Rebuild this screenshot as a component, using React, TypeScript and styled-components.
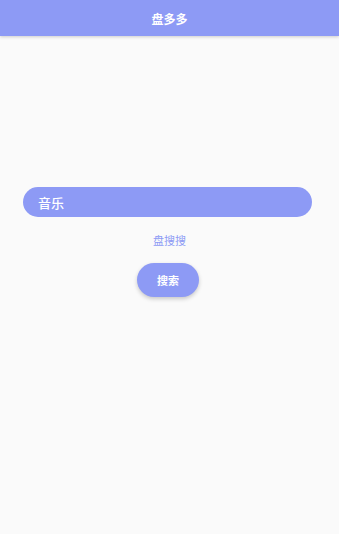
import React from "react";
import styled, { createGlobalStyle } from "styled-components";

const Global = createGlobalStyle`
  html, body { margin: 0; padding: 0; background: #fafafa; }
  body { font-family: Roboto, "Noto Sans CJK SC", "Noto Sans", sans-serif; }
`;

const Page = styled.div`
  min-height: 534px;
  background: #fafafa;
  display: flex;
  flex-direction: column;
`;

const Header = styled.header`
  height: 36px;
  background: #8d9af5;
  box-shadow: 0 1px 3px rgba(0, 0, 0, 0.18);
  display: flex;
  align-items: center;
  justify-content: center;
  color: #ffffff;
  font-size: 12px;
  font-weight: 700;
  position: relative;
  z-index: 1;
`;

const Main = styled.main`
  display: flex;
  flex-direction: column;
  align-items: center;
  padding: 151px 27px 0 23px;
`;

const Input = styled.input`
  box-sizing: border-box;
  width: 100%;
  height: 30px;
  border: none;
  outline: none;
  border-radius: 15px;
  background: #8d9af5;
  color: #ffffff;
  font-family: inherit;
  font-size: 13px;
  font-weight: 500;
  padding: 0 15px;
`;

const Brand = styled.div`
  margin-top: 17px;
  color: #8d9af5;
  font-size: 11px;
  line-height: 16px;
  margin-left: 4px;
`;

const Button = styled.button`
  margin-top: 13px;
  margin-left: 1px;
  width: 62px;
  height: 34px;
  border: none;
  border-radius: 17px;
  background: #8d9af5;
  color: #ffffff;
  font-family: inherit;
  font-size: 11px;
  font-weight: 700;
  box-shadow: 0 2px 4px rgba(0, 0, 0, 0.2);
`;

export default function App() {
  return (
    <Page>
      <Global />
      <Header>盘多多</Header>
      <Main>
        <Input defaultValue="音乐" />
        <Brand>盘搜搜</Brand>
        <Button>搜索</Button>
      </Main>
    </Page>
  );
}
